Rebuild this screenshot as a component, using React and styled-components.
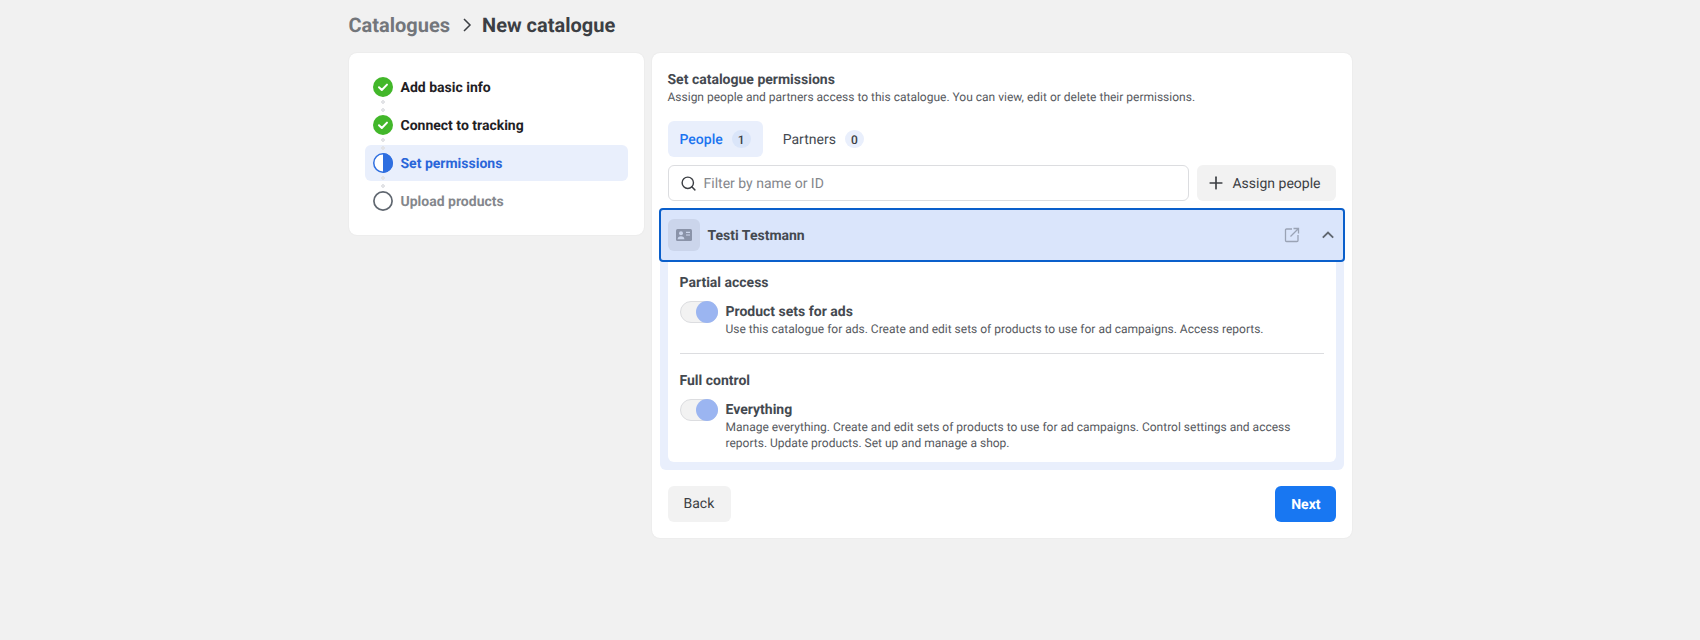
import React from 'react';
import styled, { createGlobalStyle } from 'styled-components';
import { FiPlus, FiSearch } from 'react-icons/fi';

const GlobalStyle = createGlobalStyle`
  html, body {
    margin: 0;
    padding: 0;
    background: #f1f1f1;
    font-family: Roboto, "Liberation Sans", Arial, sans-serif;
    color: #444950;
    text-rendering: geometricPrecision;
  }
  * { box-sizing: border-box; }
`;

const Page = styled.div`
  width: 1003px;
  height: 640px;
  margin: 0 auto;
  display: flex;
  flex-direction: column;
`;

const Breadcrumb = styled.div`
  display: flex;
  align-items: center;
  height: 53px;
  padding-bottom: 3px;
  font-size: 20px;
  font-weight: 700;
  line-height: 24px;
`;

const Crumb = styled.span`
  color: ${props => (props.current ? '#3c3f44' : '#73767b')};
`;

const CrumbArrow = styled.svg`
  width: 14px;
  height: 14px;
  margin: 0 8px 0 10px;
`;

const Columns = styled.div`
  display: flex;
  align-items: flex-start;
  gap: 8px;
`;

const Card = styled.div`
  background: #fff;
  border-radius: 8px;
  box-shadow: 0 0 2px rgba(0, 0, 0, 0.07);
`;

const StepsCard = styled(Card)`
  width: 295px;
  padding: 16px;
  display: flex;
  flex-direction: column;
  gap: 2px;
`;

const Step = styled.div`
  position: relative;
  height: 36px;
  display: flex;
  align-items: center;
  gap: 8px;
  padding-left: 8px;
  border-radius: 6px;
  background: ${props => (props.state === 'active' ? '#e9effc' : 'transparent')};
  font-size: 14px;
  font-weight: 700;
  color: ${props =>
    props.state === 'active' ? '#2a66d9' : props.state === 'todo' ? '#84878c' : '#1f2125'};
`;

// nudges the text down a pixel inside a centred row
const Label = styled.span`
  padding-top: 2px;
`;

const StepDots = styled.span`
  position: absolute;
  left: 16px;
  top: 31px;
  width: 4px;
  height: 12px;
  background: radial-gradient(circle 2px at 2px 2px, #e2e3e6 95%, transparent 100%) 0 0 / 4px 8px repeat-y;
  z-index: 1;
`;

const StepIcon = styled.svg`
  width: 20px;
  height: 20px;
  flex: none;
  position: relative;
  z-index: 2;
`;

const MainCard = styled(Card)`
  width: 700px;
  padding: 16px;
`;

const Title = styled.div`
  font-size: 14px;
  font-weight: 700;
  line-height: 18px;
  margin-top: 2px;
`;

const Subtitle = styled.div`
  font-size: 12px;
  line-height: 16px;
  color: #56595e;
`;

const Tabs = styled.div`
  display: flex;
  gap: 8px;
  margin-top: 16px;
`;

const Tab = styled.div`
  height: 36px;
  display: flex;
  align-items: center;
  gap: 9px;
  padding: 0 12px;
  border-radius: 6px;
  font-size: 14px;
  font-weight: ${props => (props.active ? 500 : 400)};
  color: ${props => (props.active ? '#1b74f0' : '#444950')};
  background: ${props => (props.active ? '#e9effc' : 'transparent')};
`;

const TabCount = styled.span`
  min-width: 19px;
  height: 18px;
  padding-top: 2px;
  border-radius: 9px;
  display: flex;
  align-items: center;
  justify-content: center;
  font-size: 12px;
  font-weight: 500;
  color: #3c3f44;
  background: ${props => (props.active ? '#dae5f9' : '#e9effc')};
`;

const SearchRow = styled.div`
  display: flex;
  gap: 8px;
  margin-top: 8px;
`;

const SearchBox = styled.div`
  flex: 1;
  height: 36px;
  display: flex;
  align-items: center;
  gap: 7px;
  padding: 0 11px;
  border: 1px solid #dcdde0;
  border-radius: 6px;
  font-size: 14px;
  color: #84878c;
  svg { font-size: 17px; color: #3c3f44; }
`;

const Button = styled.div`
  height: 36px;
  display: flex;
  align-items: center;
  justify-content: center;
  gap: 6px;
  padding: 0 15px 0 ${props => (props.withIcon ? 9 : 16)}px;
  border-radius: 6px;
  font-size: 14px;
  font-weight: ${props => (props.primary ? 700 : 400)};
  color: ${props => (props.primary ? '#fff' : '#3c3f44')};
  background: ${props => (props.primary ? '#1877f2' : '#f2f2f2')};
  svg { font-size: 20px; }
`;

const BackButton = styled(Button)`
  padding-right: 17px;
`;

const PersonRow = styled.div`
  height: 54px;
  margin: 7px -9px 0;
  display: flex;
  align-items: center;
  gap: 8px;
  padding: 0 7px;
  background: #dae5fb;
  border: 2px solid #0a5fcb;
  border-radius: 4px;
`;

const Avatar = styled.div`
  width: 32px;
  height: 32px;
  border-radius: 6px;
  background: #cbd5eb;
  display: flex;
  align-items: center;
  justify-content: center;
`;

const PersonName = styled.div`
  flex: 1;
  padding-top: 2px;
  font-size: 14px;
  font-weight: 700;
`;

const RowIcon = styled.svg`
  width: ${props => props.size}px;
  height: ${props => props.size}px;
  margin-right: ${props => props.gap}px;
`;

const Expanded = styled.div`
  margin: 0 -8px;
  padding: 0 8px 8px;
  background: #e9effc;
  border-radius: 0 0 6px 6px;
`;

const ExpandedInner = styled.div`
  background: #fff;
  border-radius: 0 0 6px 6px;
  padding: 12px 12px 11px;
`;

const GroupTitle = styled.div`
  font-size: 14px;
  font-weight: 700;
  line-height: 19px;
`;

const Permission = styled.div`
  display: flex;
  gap: 8px;
  margin-top: 7px;
`;

const PermissionBody = styled.div`
  padding-top: 3px;
`;

const Toggle = styled.div`
  width: 38px;
  height: 22px;
  flex: none;
  margin-top: 1px;
  border-radius: 11px;
  background: #f2f2f2;
  border: 1px solid #dcdde0;
  position: relative;
`;

const Knob = styled.span`
  position: absolute;
  top: -1px;
  right: -1px;
  width: 22px;
  height: 22px;
  border-radius: 50%;
  background: #9bb5f1;
`;

const PermissionName = styled.div`
  font-size: 14px;
  font-weight: 700;
  line-height: 18px;
`;

const PermissionText = styled.div`
  font-size: 12px;
  line-height: 16px;
  color: #56595e;
`;

const Divider = styled.div`
  height: 1px;
  background: #dcdde0;
  margin: 16px 0 18px;
`;

const Footer = styled.div`
  display: flex;
  justify-content: space-between;
  margin-top: 16px;
`;

const DoneIcon = () => (
  <StepIcon viewBox="0 0 20 20">
    <circle cx="10" cy="10" r="10" fill="#42b72a" />
    <path d="M6 10.3l2.8 2.7L14 7.6" fill="none" stroke="#fff" strokeWidth="2" strokeLinecap="round" strokeLinejoin="round" />
  </StepIcon>
);

const ActiveIcon = () => (
  <StepIcon viewBox="0 0 20 20">
    <circle cx="10" cy="10" r="9.25" fill="#fff" stroke="#2f6fe0" strokeWidth="1.5" />
    <path d="M10 0a10 10 0 0 1 0 20z" fill="#2f6fe0" />
  </StepIcon>
);

const TodoIcon = () => (
  <StepIcon viewBox="0 0 20 20">
    <circle cx="10" cy="10" r="9.1" fill="#fff" stroke="#606770" strokeWidth="1.7" />
  </StepIcon>
);

const steps = [
  { label: 'Add basic info', state: 'done', icon: <DoneIcon />, dots: true },
  { label: 'Connect to tracking', state: 'done', icon: <DoneIcon />, dots: true },
  { label: 'Set permissions', state: 'active', icon: <ActiveIcon />, dots: true },
  { label: 'Upload products', state: 'todo', icon: <TodoIcon /> },
];

const App = () => (
  <Page>
    <GlobalStyle />
    <Breadcrumb>
      <Crumb>Catalogues</Crumb>
      <CrumbArrow viewBox="0 0 14 14">
        <path d="M4 1l6 6-6 6" fill="none" stroke="#3c3f44" strokeWidth="1.5" />
      </CrumbArrow>
      <Crumb current>New catalogue</Crumb>
    </Breadcrumb>
    <Columns>
      <StepsCard>
        {steps.map(step => (
          <Step key={step.label} state={step.state}>
            {step.icon}
            <Label>{step.label}</Label>
            {step.dots && <StepDots />}
          </Step>
        ))}
      </StepsCard>
      <MainCard>
        <Title>Set catalogue permissions</Title>
        <Subtitle>Assign people and partners access to this catalogue. You can view, edit or delete their permissions.</Subtitle>
        <Tabs>
          <Tab active><Label>People</Label><TabCount active>1</TabCount></Tab>
          <Tab><Label>Partners</Label><TabCount>0</TabCount></Tab>
        </Tabs>
        <SearchRow>
          <SearchBox><FiSearch /><Label>Filter by name or ID</Label></SearchBox>
          <Button withIcon><FiPlus /><Label>Assign people</Label></Button>
        </SearchRow>
        <PersonRow>
          <Avatar>
            <svg width="16" height="12" viewBox="0 0 16 12">
              <rect width="16" height="12" rx="1.5" fill="#8a93a8" />
              <circle cx="5" cy="4.2" r="2" fill="#cbd5eb" />
              <path d="M1.6 10.2c0-2 1.5-3 3.4-3s3.4 1 3.4 3z" fill="#cbd5eb" />
              <path d="M10 3.4h4M10 6h4" stroke="#cbd5eb" strokeWidth="1.1" />
            </svg>
          </Avatar>
          <PersonName>Testi Testmann</PersonName>
          <RowIcon size={16} gap={14} viewBox="0 0 16 16">
            <path d="M8 2H2.5A1 1 0 0 0 1.5 3v10.5a1 1 0 0 0 1 1H13a1 1 0 0 0 1-1V8" fill="none" stroke="#9aa3b5" strokeWidth="1.3" />
            <path d="M6.5 9.5L14 2M9.5 1.5h5v5" fill="none" stroke="#9aa3b5" strokeWidth="1.3" />
          </RowIcon>
          <RowIcon size={12} gap={2} viewBox="0 0 12 12">
            <path d="M0.8 8.6L6 3.6l5.2 5" fill="none" stroke="#606770" strokeWidth="1.9" />
          </RowIcon>
        </PersonRow>
        <Expanded>
          <ExpandedInner>
            <GroupTitle>Partial access</GroupTitle>
            <Permission>
              <Toggle><Knob /></Toggle>
              <PermissionBody>
                <PermissionName>Product sets for ads</PermissionName>
                <PermissionText>Use this catalogue for ads. Create and edit sets of products to use for ad campaigns. Access reports.</PermissionText>
              </PermissionBody>
            </Permission>
            <Divider />
            <GroupTitle>Full control</GroupTitle>
            <Permission>
              <Toggle><Knob /></Toggle>
              <PermissionBody>
                <PermissionName>Everything</PermissionName>
                <PermissionText>Manage everything. Create and edit sets of products to use for ad campaigns. Control settings and access reports. Update products. Set up and manage a shop.</PermissionText>
              </PermissionBody>
            </Permission>
          </ExpandedInner>
        </Expanded>
        <Footer>
          <BackButton>Back</BackButton>
          <Button primary><Label>Next</Label></Button>
        </Footer>
      </MainCard>
    </Columns>
  </Page>
);

export default App;
